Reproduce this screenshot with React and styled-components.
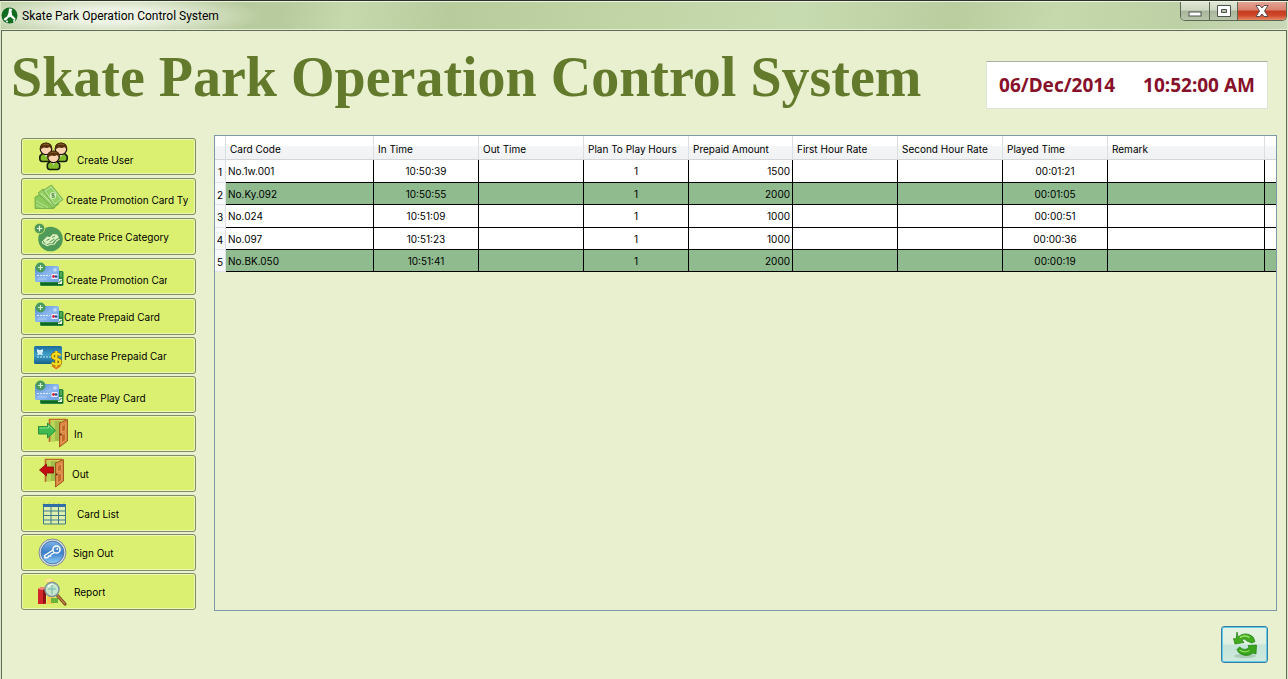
import React from 'react';
import styled, { createGlobalStyle } from 'styled-components';

const GlobalStyle = createGlobalStyle`
  *, *::before, *::after { box-sizing: border-box; }
  body { margin: 0; font-family: Inter, "DejaVu Sans", sans-serif; font-size: 10px; color: #000; }
  button { font: inherit; color: inherit; margin: 0; padding: 0; }
`;

const Window = styled.div`
  min-height: 100vh;
  display: flex;
  flex-direction: column;
  padding: 0 1px;
  background: #dce6c6;
  border-top: 1px solid #2c3026;
`;

const TitleBar = styled.header`
  height: 29px;
  flex: none;
  display: flex;
  align-items: center;
  gap: 4px;
  background:
    radial-gradient(ellipse 150px 24px at 110px 14px, rgba(240, 245, 232, 0.95) 30%, rgba(240, 245, 232, 0) 100%),
    linear-gradient(100deg, #b9cc9f 0%, #b8cb9e 22%, #c6d9ac 27%, #b7cb9d 35%, #c0d4a5 48%, #c7dbb0 62%, #b9cd9f 74%, #c5d9ac 82%, #bdd0a5 92%, #c9d8b8 100%);
  border-top: 1px solid #eef4e2;
  border-bottom: 1px solid #e4edd2;
`;

const Caption = styled.span`
  flex: 1;
  font-family: Roboto, sans-serif;
  font-size: 12px;
  line-height: 16px;
`;

const WindowControls = styled.div`
  display: flex;
  align-self: flex-start;
  height: 19px;
  border: 1px solid #5b6754;
  border-top: 0;
  border-radius: 0 0 5px 5px;
  overflow: hidden;
`;

const ControlButton = styled.button`
  width: ${(p) => (p.$close ? 49 : 28)}px;
  display: grid;
  place-items: center;
  border: 0;
  border-left: ${(p) => (p.$first ? '0' : '1px solid #5b6754')};
  background: ${(p) =>
    p.$close
      ? 'linear-gradient(#e3a595 0%, #d9806c 45%, #c43a1e 50%, #d0492b 75%, #e58a66 100%)'
      : 'linear-gradient(#dfe6d4 0%, #cfd8c3 45%, #a9b69c 50%, #b8c5a9 100%)'};
`;

const Client = styled.main`
  flex: 1;
  display: flex;
  flex-direction: column;
  background: #e8f0cf;
  border: 1px solid #5f6b58;
  border-bottom: 0;
  padding: 0 9px 16px;
`;

const Banner = styled.div`
  min-height: 104px;
  display: flex;
  align-items: flex-start;
  justify-content: space-between;
  padding: 14px 9px 0 0;
`;

const Heading = styled.h1`
  margin: 0;
  font-family: "Liberation Serif", serif;
  font-weight: 700;
  font-size: 56px;
  line-height: 64px;
  color: #637a2c;
  white-space: nowrap;
`;

const Clock = styled.div`
  display: flex;
  gap: 28px;
  margin-top: 16px;
  padding: 0 12px;
  background: #fff;
  border: 1px solid #dfe5d6;
  border-top-color: #aab0a2;
  font-family: "Noto Sans", sans-serif;
  font-weight: 700;
  font-size: 19px;
  line-height: 46px;
  color: #87102a;
  white-space: nowrap;
`;

const Workspace = styled.div`
  flex: 1;
  display: flex;
  align-items: stretch;
  gap: 18px;
  padding-left: 10px;
`;

const Sidebar = styled.nav`
  width: 175px;
  flex: none;
  display: flex;
  flex-direction: column;
  gap: 2px;
  padding-top: 3px;
`;

const Group = styled.div`
  display: flex;
  flex-direction: column;
  gap: ${(p) => p.$gap}px;
`;

const NavButton = styled.button`
  height: 37px;
  display: flex;
  align-items: center;
  gap: ${(p) => p.$gap}px;
  padding-left: ${(p) => p.$indent}px;
  background: #dbf070;
  border: 1px solid #7f8c66;
  border-radius: 3px;
  box-shadow: inset 0 0 0 1px #eef8b4;
  text-align: left;

  svg { flex: none; }
`;

const NavLabel = styled.span`
  max-width: ${(p) => (p.$clip ? `${p.$clip}px` : 'none')};
  padding-top: ${(p) => (p.$low ? 6 : 0)}px;
  line-height: 14px;
  overflow: hidden;
  white-space: nowrap;
`;

const GridPanel = styled.section`
  flex: 1;
  min-width: 0;
  border: 1px solid #7d98a6;
`;

const Table = styled.table`
  width: 100%;
  table-layout: fixed;
  border-collapse: separate;
  border-spacing: 0;
`;

const HeadCell = styled.th`
  height: 24px;
  padding: 2px 0 0 4px;
  background: linear-gradient(#fff 0%, #fff 42%, #f4f5f7 46%, #f0f2f4 100%);
  border-right: 1px solid #dcdfe2;
  border-bottom: 1px solid #d3d5d6;
  font-weight: 400;
  text-align: left;
  white-space: nowrap;

  &:last-child { border-right: 0; }
`;

const RowNumber = styled.th`
  padding: 2px 0 0;
  background: #f8f9fa;
  border-right: 1px solid #dcdfe2;
  border-bottom: 1px solid #e2e4e6;
  font-weight: 400;
  text-align: center;
`;

const Cell = styled.td`
  padding: 0 2px;
  border-right: ${(p) => (p.$last ? '0' : '1px solid #000')};
  border-bottom: 1px solid #000;
  line-height: 14px;
  text-align: ${(p) => p.$align || 'left'};
`;

const Row = styled.tr`
  height: 22px;
  background: ${(p) => (p.$marked ? '#8fbb8f' : '#fff')};
  &:nth-child(-n + 3):nth-child(odd) { height: 23px; }
`;

const Footer = styled.footer`
  display: flex;
  justify-content: flex-end;
  padding: 15px 9px 0 0;
`;

const RefreshButton = styled.button`
  width: 47px;
  height: 37px;
  display: grid;
  place-items: center;
  background: linear-gradient(#e6f3e2 0%, #dff0e0 48%, #c6e4d9 52%, #cfe9dc 100%);
  border: 1px solid #3c7fa6;
  border-radius: 3px;
  box-shadow: inset 0 0 0 1px #5fcbe6;
`;

const AppLogo = () => (
  <svg width="17" height="17" viewBox="0 0 17 17" aria-hidden="true">
    <circle cx="8.500" cy="8.500" r="8" fill="#116b20" />
    <path d="M8 1.500l3.500.5-1 2 .5 4 3.500 3.500-.5 2-4.500-3.500-2 .5L5 13.500 2.500 13l1-2 2.500-1.500L7.500 6z" fill="#fff" />
    <circle cx="6" cy="14.500" r="1" fill="#fff" />
    <circle cx="13" cy="14" r="1" fill="#fff" />
  </svg>
);

const Person = ({ x, y }) => (
  <g transform={`translate(${x} ${y})`}>
    <path d="M1 14q-1 5 2 5.500h8q3-.5 2-5.500l-3-3H4z" fill="#86bd2c" stroke="#151c08" strokeWidth="1.600" />
    <path d="M4.500 11l2.500 4 2.500-4z" fill="#f6fadf" />
    <circle cx="7" cy="6.800" r="5.800" fill="#fbd3ae" stroke="#1c1005" strokeWidth="1.200" />
    <path d="M1.300 8Q.2 .8 7 .8T12.700 8Q11.500 6 10.500 5 8 6.500 5 5.500 2.500 6 1.300 8z" fill="#54310f" />
    <path d="M4 3q3-1.800 6 0" stroke="#8d5a2b" fill="none" />
  </g>
);

const UsersIcon = () => (
  <svg width="31" height="29" viewBox="0 0 31 29" aria-hidden="true">
    <Person x={1} y={0} />
    <Person x={16} y={0} />
    <Person x={8.5} y={8} />
  </svg>
);

const MoneyIcon = () => (
  <svg width="30" height="26" viewBox="0 0 30 26" aria-hidden="true">
    <path d="M1 13l4-2 16 12-1 1.500H1z" fill="#8ccb5c" stroke="#69a845" strokeWidth="0.800" />
    <path d="M2 17l12 6.500M2 20.500l7 3.500" stroke="#bfe79f" strokeWidth="0.800" />
    <path d="M4 9l5-4 16 15-6 4z" fill="#97d268" stroke="#69a845" strokeWidth="0.800" />
    <path d="M7 9.500l14 12.500" stroke="#c8ecaa" />
    <path d="M9 6.500L17.500 1 29 15.500 20.500 22z" fill="#94d165" stroke="#69a845" strokeWidth="0.800" />
    <path d="M11 7l6-4.200L27.200 15.300 21 20z" fill="none" stroke="#c6ebaa" strokeWidth="0.800" />
    <ellipse cx="19" cy="11.500" rx="3" ry="3.500" fill="#dcf3ca" />
    <path d="M20.500 9.700h-2.600v1.800h2.400v1.800h-2.600M19 8.800v5.400" fill="none" stroke="#4e8d33" strokeWidth="0.800" />
  </svg>
);

const PriceIcon = () => (
  <svg width="30" height="30" viewBox="0 0 30 30" aria-hidden="true">
    <circle cx="16.500" cy="17" r="12.300" fill="#4f9a58" />
    <path d="M9 18.500l4-4 3 .5 3-3 4 .5 2 3-4 2.500-2.500 3-4 .5-2 1z" fill="#dff0c0" />
    <path d="M8.500 19v2l4.500 2.500 3.500-1 4-.5 2-3 3-2" fill="none" stroke="#dff0c0" strokeWidth="1.200" />
    <path d="M12.500 18.500l3-1.500M18 15.500l3-1.500M15.500 20l5-3" fill="none" stroke="#4f9a58" />
    <circle cx="5.500" cy="6.500" r="5.300" fill="#4f9a58" stroke="#dbf070" strokeWidth="0.800" />
    <path d="M5.500 3.800v5.400M2.800 6.500h5.400" stroke="#e9f6da" strokeWidth="1.200" />
  </svg>
);

const CardsIcon = () => (
  <svg width="30" height="29" viewBox="0 0 30 29" aria-hidden="true">
    <defs>
      <linearGradient id="cardBlue" x1="0" y1="0" x2="1" y2="1">
        <stop offset="0" stopColor="#4f88dc" />
        <stop offset="0.500" stopColor="#8db8ee" />
        <stop offset="1" stopColor="#6b9fe2" />
      </linearGradient>
    </defs>
    <rect x="6" y="9" width="23.500" height="15" rx="1.500" fill="#25893a" />
    <path d="M7 22h22" stroke="#11642a" strokeWidth="2" />
    <rect x="24" y="17" width="4" height="5" fill="#e6f1e2" />
    <path d="M24.500 21l3-3" stroke="#11642a" />
    <path d="M27 10v5" stroke="#83cc72" />
    <rect x="1" y="4" width="24" height="16" rx="1.500" fill="url(#cardBlue)" />
    <path d="M3 13.500h13" stroke="#dbe9fb" strokeDasharray="2 1" />
    <path d="M4 17h9" stroke="#a9caf4" />
    <circle cx="21" cy="8" r="1.800" fill="#c6dcf5" />
    <rect x="17.500" y="12" width="6" height="5" fill="#f4eef5" />
    <circle cx="19.500" cy="14.500" r="1.400" fill="#cf2634" />
    <circle cx="22" cy="14.500" r="1.300" fill="#24479c" />
    <circle cx="6.500" cy="5.500" r="5" fill="#4b9a5e" />
    <path d="M6.500 3v5M4 5.500h5" stroke="#d5efd0" strokeWidth="1.200" />
  </svg>
);

const PurchaseIcon = () => (
  <svg width="30" height="28" viewBox="0 0 30 28" aria-hidden="true">
    <defs>
      <linearGradient id="purchaseBlue" x1="0" y1="0" x2="0" y2="1">
        <stop offset="0" stopColor="#1c6b9c" />
        <stop offset="0.500" stopColor="#3fa0c8" />
        <stop offset="1" stopColor="#14628c" />
      </linearGradient>
    </defs>
    <rect x="0" y="4" width="28" height="18" rx="1.500" fill="url(#purchaseBlue)" />
    <path d="M3 7l2 1h2l2-1v3l-1 1 1 2H7l-1-1-1 1H3l1-2-1-1z" fill="#d7edf6" />
    <path d="M3 15h15" stroke="#c8e6f2" strokeDasharray="2 1" />
    <path d="M26.500 13.500q-1.500-2-4.500-2-3.500 0-3.500 2.800 0 2.200 4 2.700 4 .5 4 3t-4 2.500q-3 0-4.500-2M22.300 9v17" fill="none" stroke="#8c6a08" strokeWidth="3.400" />
    <path d="M26.500 13.500q-1.500-2-4.500-2-3.500 0-3.500 2.800 0 2.200 4 2.700 4 .5 4 3t-4 2.500q-3 0-4.500-2M22.300 9v17" fill="none" stroke="#f8dc22" strokeWidth="2.200" />
    <path d="M18 23.500l4.300 3 4.200-3" stroke="#e27a14" strokeWidth="1.800" fill="none" />
  </svg>
);

const Door = () => (
  <>
    <path d="M3 3h11v15L7 24l-4-1z" fill="#b9d556" />
    <path d="M8 3h6v20H8z" fill="#a2bd49" />
    <path d="M2.500 24V1.500h17" fill="none" stroke="#b9682a" strokeWidth="1.600" />
    <path d="M20.500 1.500V23L12.500 29V5z" fill="#dc8740" stroke="#8d4516" strokeWidth="0.800" />
    <path d="M18.500 5.500v7l-4 1.500V8zM18.500 15v7l-4 3v-8.500z" fill="#c46a28" stroke="#e8ab6f" strokeWidth="0.700" />
    <circle cx="13.800" cy="16.500" r="0.900" fill="#52300f" />
  </>
);

const InIcon = () => (
  <svg width="30" height="31" viewBox="0 0 30 31" aria-hidden="true">
    <g transform="translate(9 0)"><Door /></g>
    <path d="M0.500 8.500h9V5l8 7.500-8 7.500v-4h-9z" fill="#3fb950" stroke="#2a9140" />
    <path d="M1.500 10h9V7.500l4 4" fill="none" stroke="#8be08d" />
  </svg>
);

const OutIcon = () => (
  <svg width="26" height="31" viewBox="0 0 26 31" aria-hidden="true">
    <g transform="translate(5 0)"><Door /></g>
    <path d="M15.500 9h-7V6L1.500 12l7 6V15h7z" fill="#c40d12" stroke="#8c0508" strokeWidth="0.800" />
  </svg>
);

const CardListIcon = () => (
  <svg width="25" height="24" viewBox="0 0 25 24" aria-hidden="true">
    <path d="M0 3l3-3M5 3l3-3M10 3l3-3M15 3l3-3M20 3l3-3" stroke="#b9d06c" />
    <rect x="1" y="2" width="23" height="3" fill="#2f6ea6" />
    <rect x="1.500" y="5" width="22" height="17" fill="#dff0ac" />
    <path d="M1.500 4v18h22V4M9 5v17M16.500 5v17M1 9h23M1 13.500h23M1 18h23" fill="none" stroke="#3d7a85" />
  </svg>
);

const KeyIcon = () => (
  <svg width="29" height="29" viewBox="0 0 29 29" aria-hidden="true">
    <defs>
      <linearGradient id="keyBlue" x1="0" y1="0" x2="0" y2="1">
        <stop offset="0" stopColor="#7fb3e8" />
        <stop offset="0.500" stopColor="#3c7fcb" />
        <stop offset="1" stopColor="#8fd0f7" />
      </linearGradient>
    </defs>
    <circle cx="14.500" cy="14.500" r="13.500" fill="#d3dae0" stroke="#7d8b98" />
    <circle cx="14.500" cy="14.500" r="11.300" fill="url(#keyBlue)" stroke="#4f78a8" />
    <circle cx="18.500" cy="11.500" r="3.600" fill="none" stroke="#fff" strokeWidth="1.500" />
    <circle cx="19.300" cy="11" r="0.900" fill="#fff" />
    <path d="M15 12l-8.500 5.500.5 2.500 3-.5.500-1.500h2l.5-1.500 3.500-2" fill="none" stroke="#fff" strokeWidth="1.400" />
  </svg>
);

const ReportIcon = () => (
  <svg width="30" height="30" viewBox="0 0 30 30" aria-hidden="true">
    <path d="M6 4l4-3 6 2v24H9V5z" fill="#f3cf4f" />
    <path d="M6 4l4-3 6 2-5 2z" fill="#fbe999" />
    <path d="M13 21h7v5h-7z" fill="#6cb53b" />
    <path d="M0 12l3-2 5 1v16H0z" fill="#d3262b" />
    <path d="M0 12l3-2 5 1-3 2z" fill="#f48d80" />
    <path d="M5 13l3-2v14l-3 2z" fill="#8d1014" />
    <path d="M19 18l8 9" stroke="#7a4a1e" strokeWidth="3.200" strokeLinecap="round" />
    <path d="M19 18l8 9" stroke="#c08344" strokeWidth="1.200" />
    <circle cx="14" cy="12.500" r="7" fill="#bfe6dc" fillOpacity="0.850" stroke="#7d969c" strokeWidth="1.500" />
    <path d="M10 12h8M14 8v9" stroke="#6fb8ac" />
    <path d="M10 10q2-3 5-3" stroke="#fff" strokeWidth="1.200" fill="none" />
  </svg>
);

const RefreshIcon = () => (
  <svg width="26" height="28" viewBox="0 0 26 28" aria-hidden="true">
    <ellipse cx="13" cy="25" rx="11" ry="2.200" fill="#9dc0a8" fillOpacity="0.700" />
    <path d="M5 1l1 5q5-4.500 11-2.500 5 1.500 6 7l-3 1.500-5-2q-2-3-5.500-1.500L12 11.500 3 13 1.500 7.500 4 8z" fill="#42aa1e" stroke="#1f7d12" strokeWidth="0.700" />
    <path d="M8 6.500q5-3 9.500 0" stroke="#9be56b" strokeWidth="1.500" fill="none" />
    <path d="M16 14.500l8.500-.5-.5 9-3-1q-5 4-11 1.500-4-1.500-5-5L7.500 16l3 2q3.500 1.500 6.500-1.500z" fill="#3aa41c" stroke="#1f7d12" strokeWidth="0.700" />
    <path d="M7.500 19q5 3.500 10 .5" stroke="#8fdd60" strokeWidth="1.300" fill="none" />
  </svg>
);

const NAV_GROUPS = [
  {
    gap: 3,
    items: [
      { label: 'Create User', Icon: UsersIcon, indent: 16, gap: 8, low: true },
      { label: 'Create Promotion Card Ty', Icon: MoneyIcon, indent: 12, gap: 2, low: true },
      { label: 'Create Price Category', Icon: PriceIcon, indent: 12, gap: 0 },
      { label: 'Create Promotion Card', Icon: CardsIcon, indent: 12, gap: 2, low: true, clip: 101 },
      { label: 'Create Prepaid Card', Icon: CardsIcon, indent: 12, gap: 0 },
    ],
  },
  {
    gap: 2,
    items: [
      { label: 'Purchase Prepaid Car', Icon: PurchaseIcon, indent: 12, gap: 0 },
      { label: 'Create Play Card', Icon: CardsIcon, indent: 12, gap: 2, low: true },
    ],
  },
  {
    gap: 3,
    items: [
      { label: 'In', Icon: InIcon, indent: 16, gap: 6 },
      { label: 'Out', Icon: OutIcon, indent: 16, gap: 8 },
      { label: 'Card List', Icon: CardListIcon, indent: 20, gap: 10 },
    ],
  },
  {
    gap: 2,
    items: [
      { label: 'Sign Out', Icon: KeyIcon, indent: 16, gap: 6 },
      { label: 'Report', Icon: ReportIcon, indent: 16, gap: 6 },
    ],
  },
];

const COLUMNS = [
  { title: 'Card Code', key: 'code', width: 148 },
  { title: 'In Time', key: 'inTime', width: 105, align: 'center' },
  { title: 'Out Time', width: 105 },
  { title: 'Plan To Play Hours', key: 'hours', width: 105, align: 'center' },
  { title: 'Prepaid Amount', key: 'amount', width: 104, align: 'right' },
  { title: 'First Hour Rate', width: 105 },
  { title: 'Second Hour Rate', width: 105 },
  { title: 'Played Time', key: 'played', width: 105, align: 'center' },
  { title: 'Remark' },
  { title: '', width: 11 },
];

const ROWS = [
  { code: 'No.1w.001', inTime: '10:50:39', hours: 1, amount: 1500, played: '00:01:21' },
  { code: 'No.Ky.092', inTime: '10:50:55', hours: 1, amount: 2000, played: '00:01:05', marked: true },
  { code: 'No.024', inTime: '10:51:09', hours: 1, amount: 1000, played: '00:00:51' },
  { code: 'No.097', inTime: '10:51:23', hours: 1, amount: 1000, played: '00:00:36' },
  { code: 'No.BK.050', inTime: '10:51:41', hours: 1, amount: 2000, played: '00:00:19', marked: true },
];

export default function App() {
  return (
    <Window>
      <GlobalStyle />
      <TitleBar>
        <AppLogo />
        <Caption>Skate Park Operation Control System</Caption>
        <WindowControls>
          <ControlButton $first aria-label="Minimize">
            <svg width="14" height="12" viewBox="0 0 14 12">
              <rect x="1" y="7" width="12" height="4" fill="#fff" stroke="#4d5450" />
            </svg>
          </ControlButton>
          <ControlButton aria-label="Maximize">
            <svg width="14" height="12" viewBox="0 0 14 12">
              <path d="M.5 .5h13v11H.5zM4.500 4.500v3h5v-3z" fill="#fff" fillRule="evenodd" stroke="#4d5450" />
            </svg>
          </ControlButton>
          <ControlButton $close aria-label="Close">
            <svg width="14" height="12" viewBox="0 0 14 12">
              <path d="M1 .5h4l2 2.500 2-2.500h4L9.500 6l3.500 5.500H9L7 9l-2 2.500H1L4.500 6z" fill="#fff" stroke="#5a4a4a" />
            </svg>
          </ControlButton>
        </WindowControls>
      </TitleBar>
      <Client>
        <Banner>
          <Heading>Skate Park Operation Control System</Heading>
          <Clock>
            <span>06/Dec/2014</span>
            <span>10:52:00 AM</span>
          </Clock>
        </Banner>
        <Workspace>
          <Sidebar>
            {NAV_GROUPS.map((group) => (
              <Group key={group.items[0].label} $gap={group.gap}>
                {group.items.map(({ label, Icon, indent, gap, low, clip }) => (
                  <NavButton key={label} $indent={indent} $gap={gap}>
                    <Icon />
                    <NavLabel $low={low} $clip={clip}>{label}</NavLabel>
                  </NavButton>
                ))}
              </Group>
            ))}
          </Sidebar>
          <GridPanel>
            <Table>
              <colgroup>
                <col style={{ width: 11 }} />
                {COLUMNS.map((c) => (
                  <col key={c.title} style={{ width: c.width }} />
                ))}
              </colgroup>
              <thead>
                <tr>
                  <HeadCell />
                  {COLUMNS.map((c) => (
                    <HeadCell key={c.title} scope="col">{c.title}</HeadCell>
                  ))}
                </tr>
              </thead>
              <tbody>
                {ROWS.map((row, i) => (
                  <Row key={row.code} $marked={row.marked}>
                    <RowNumber scope="row">{i + 1}</RowNumber>
                    {COLUMNS.map((c, n) => (
                      <Cell key={c.title} $align={c.align} $last={n === COLUMNS.length - 1}>
                        {c.key ? row[c.key] : ''}
                      </Cell>
                    ))}
                  </Row>
                ))}
              </tbody>
            </Table>
          </GridPanel>
        </Workspace>
        <Footer>
          <RefreshButton aria-label="Refresh">
            <RefreshIcon />
          </RefreshButton>
        </Footer>
      </Client>
    </Window>
  );
}
